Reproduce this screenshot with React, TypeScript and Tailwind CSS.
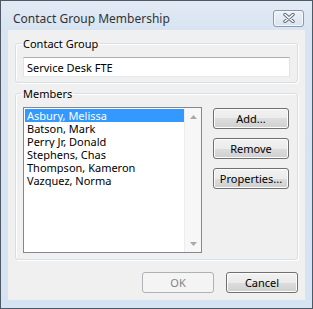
import React from "react";

const btn =
  "h-[21px] border border-[#707070] rounded-[3px] bg-[linear-gradient(to_bottom,#f2f2f2_0%,#ebebeb_50%,#dddddd_50%,#cfcfcf_100%)] shadow-[inset_0_0_0_1px_#fcfcfc] flex items-center justify-center text-black";

export default function App() {
  const members = [
    "Asbury, Melissa",
    "Batson, Mark",
    "Perry Jr, Donald",
    "Stephens, Chas",
    "Thompson, Kameron",
    "Vazquez, Norma",
  ];
  return (
    <div className="w-[313px] h-[309px] border border-[#4f5865] bg-[linear-gradient(to_bottom,#e2eaf4_0px,#d8e4f2_30px,#d6e3f2_100%)] flex flex-col text-[11px] leading-[13px] [font-family:'Noto_Sans',sans-serif] text-black">
      <div className="h-[29px] pt-[5px] pl-[12px] pr-[8px] flex items-center justify-between">
        <span className="text-[#333] text-[12px]">Contact Group Membership</span>
        <div className="w-[31px] h-[17px] border border-[#8a99ae] rounded-[3px] bg-[linear-gradient(to_bottom,#edf2f8,#d9e2ee)] shadow-[inset_0_0_0_1px_#f4f7fb] flex items-center justify-center">
          <svg width="12" height="10" viewBox="0 0 12 10">
            <path d="M2 1.5 L10 8.5 M10 1.5 L2 8.5" stroke="#5d6875" strokeWidth="3.4" strokeLinecap="round" />
            <path d="M2 1.5 L10 8.5 M10 1.5 L2 8.5" stroke="#ffffff" strokeWidth="1.6" strokeLinecap="round" />
          </svg>
        </div>
      </div>
      <div className="mx-[7px] h-[270px] bg-[#f0f0f0] flex flex-col px-[7px] pt-[7px]">
        <fieldset className="border border-[#d5dfe5] rounded-[3px] shadow-[inset_1px_1px_0_#fff,1px_1px_0_#fff] px-[7px] pb-[5px] m-0 min-w-0">
          <legend className="ml-[-2px] px-[2px] leading-[13px]">Contact Group</legend>
          <div className="mt-[7px] h-[20px] border border-[#abadb3] border-l-[#e2e3ea] border-r-[#e2e3ea] border-b-[#e3e9ef] bg-white flex items-center pl-[3px]">
            Service Desk FTE
          </div>
        </fieldset>
        <fieldset className="mt-[4px] border border-[#d5dfe5] rounded-[3px] shadow-[inset_1px_1px_0_#fff,1px_1px_0_#fff] px-[7px] pb-[6px] m-0 min-w-0">
          <legend className="ml-[-2px] px-[2px] leading-[13px]">Members</legend>
          <div className="mt-[7px] flex gap-[11px]">
            <div className="w-[179px] h-[146px] border border-[#828790] bg-white flex">
              <div className="flex-1 pt-[1px] pl-[1px]">
                {members.map((m, i) => (
                  <div
                    key={m}
                    className={
                      "h-[13px] leading-[13px] pl-[2px] whitespace-nowrap overflow-hidden " +
                      (i === 0 ? "bg-[#3399ff] text-white" : "text-black")
                    }
                  >
                    {m}
                  </div>
                ))}
              </div>
              <div className="w-[17px] bg-[#f7f7f7] border-l border-[#ececec] flex flex-col justify-between">
                <div className="h-[17px] flex items-center justify-center">
                  <svg width="7" height="4" viewBox="0 0 7 4">
                    <path d="M0 4 L3.5 0 L7 4 Z" fill="#a9a9a9" />
                  </svg>
                </div>
                <div className="h-[17px] flex items-center justify-center">
                  <svg width="7" height="4" viewBox="0 0 7 4">
                    <path d="M0 0 L3.5 4 L7 0 Z" fill="#a9a9a9" />
                  </svg>
                </div>
              </div>
            </div>
            <div className="flex flex-col gap-[9px] pt-[1px]">
              <div className={btn + " w-[76px]"}>Add...</div>
              <div className={btn + " w-[76px]"}>Remove</div>
              <div className={btn + " w-[76px]"}>Properties...</div>
            </div>
          </div>
        </fieldset>
        <div className="mt-[12px] flex justify-end gap-[12px]">
          <div className="w-[72px] h-[21px] border border-[#adb2b5] rounded-[3px] bg-[#f4f4f4] flex items-center justify-center text-[#838383]">
            OK
          </div>
          <div className={btn + " w-[72px]"}>Cancel</div>
        </div>
      </div>
    </div>
  );
}
